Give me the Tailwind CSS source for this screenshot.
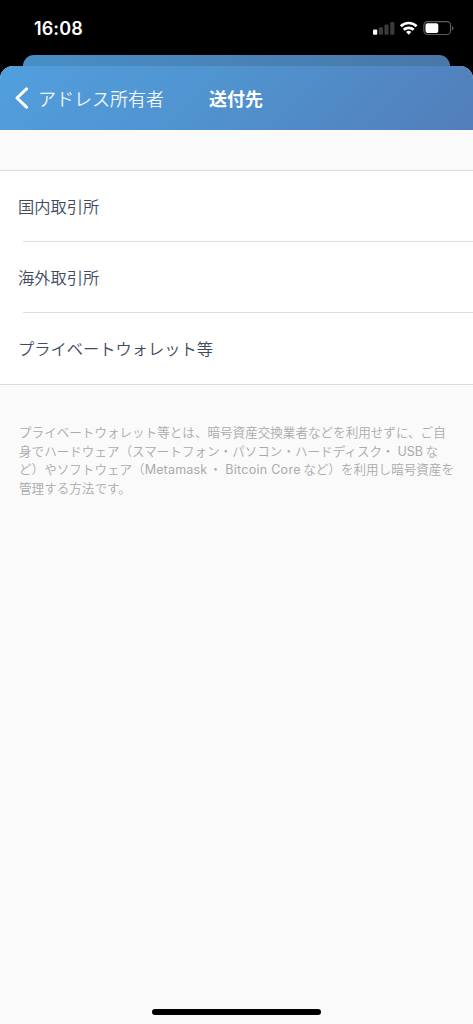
<!DOCTYPE html>
<html lang="ja">
<head>
<meta charset="utf-8">
<title>送付先</title>
<script src="https://cdn.jsdelivr.net/npm/@tailwindcss/browser@4"></script>
</head>
<body class="bg-black font-['Inter','Noto_Sans_CJK_JP',sans-serif]">
<div class="flex h-[1024px] w-[473px] flex-col overflow-hidden bg-black">
  <div class="flex h-[55px] shrink-0 items-start justify-between pt-[18px] pr-[19px] pl-[34px]">
    <span class="text-[18px] leading-[21px] font-semibold tracking-[0.1px] text-white">16:08</span>
    <svg class="mt-[2px]" width="81" height="18" viewBox="373 20 81 18">
      <rect x="373" y="29.6" width="4.2" height="5.2" rx="1" fill="#fff"/>
      <rect x="378.800" y="27.200" width="4.200" height="7.600" rx="1" fill="#3a3a3a"/>
      <rect x="384.400" y="24.600" width="4.200" height="10.200" rx="1" fill="#3a3a3a"/>
      <rect x="390.200" y="22" width="4.200" height="12.800" rx="1" fill="#3a3a3a"/>
      <g fill="none" stroke="#fff" stroke-width="2.700">
        <path d="M400.800 26.200a11.400 11.400 0 0 1 15.800 0"/>
        <path d="M403.700 29.800a7.200 7.200 0 0 1 10 0"/>
      </g>
      <path d="M408.700 34.800l-2.600-2.700a3.700 3.700 0 0 1 5.200 0z" fill="#fff"/>
      <rect x="423.900" y="21.700" width="26.600" height="12.800" rx="3.600" fill="none" stroke="#5c5c5c" stroke-width="1.200"/>
      <rect x="425.500" y="23.300" width="12.800" height="9.600" rx="2" fill="#fff"/>
      <path d="M452 26.200a2.300 2.300 0 0 1 0 4.200z" fill="#666"/>
    </svg>
  </div>
  <div class="mx-[23px] -mb-[13px] h-[24px] shrink-0 rounded-t-[11px] bg-linear-to-r from-[#478fc6] to-[#4a76a8]"></div>
  <div class="flex flex-1 flex-col overflow-hidden rounded-t-[13px] bg-[#fafafa]">
    <header class="flex h-[64px] shrink-0 items-center bg-[linear-gradient(135deg,#519fdd_0%,#5093cf_45%,#527eba_100%)] pl-[15px] text-[18px] text-white">
      <svg width="14" height="22" viewBox="0 0 14 22" fill="none" stroke="#fff" stroke-width="3" stroke-linecap="round" stroke-linejoin="round"><path d="M11.500 1.800 2 11l9.500 9.200"/></svg>
      <span class="ml-[9px] w-[171px] pt-[2px] font-[350] text-white/90">アドレス所有者</span>
      <h1 class="pt-[2px] font-bold">送付先</h1>
    </header>
    <ul class="mt-[40px] border-y border-[#dcdcdc] bg-white text-[16.250px] font-[350] text-[#414b60]">
      <li class="flex h-[70px] items-center pt-[2px] pl-[18px]">国内取引所</li>
      <li class="ml-[23px] h-px bg-[#dedede]"></li>
      <li class="flex h-[70px] items-center pt-[2px] pl-[18px]">海外取引所</li>
      <li class="ml-[23px] h-px bg-[#dedede]"></li>
      <li class="flex h-[71px] items-center pt-[2px] pl-[18px]">プライベートウォレット等</li>
    </ul>
    <p class="mt-[39px] pl-[19px] text-[12.570px] leading-[18.700px] font-[350] whitespace-nowrap text-[#aaaaaa]">プライベートウォレット等とは、暗号資産交換業者などを利用せずに、ご自<br>身でハードウェア（スマートフォン・パソコン・ハードディスク・<span class="ml-[3px] inline-block w-[28px] font-normal">USB</span>な<br>ど）やソフトウェア（<span class="inline-block w-[64.500px] font-normal tracking-[0.150px]">Metamask</span>・<span class="ml-[3.500px] inline-block w-[78px] font-normal tracking-[0.250px]">Bitcoin Core</span>など）を利用し暗号資産を<br>管理する方法です。</p>
    <div class="mx-auto mt-auto mb-[9px] h-[6px] w-[169px] rounded-full bg-black"></div>
  </div>
</div>
</body>
</html>
